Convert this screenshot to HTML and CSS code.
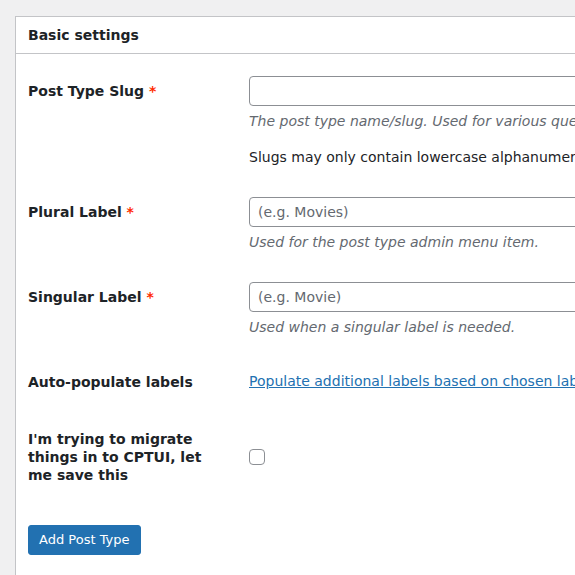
FILE: index.html
```html
<!DOCTYPE html>
<html>
<head>
<meta charset="utf-8">
<link rel="stylesheet" href="styles.css">
</head>
<body>
<div class="card">
  <h2 class="card-title">Basic settings</h2>
  <div class="inside">
    <div class="form-grid">
      <div class="th"><label>Post Type Slug <span class="req">*</span></label></div>
      <div class="td">
        <input class="text" type="text">
        <p class="desc">The post type name/slug. Used for various queries for post type content.</p>
        <p class="note">Slugs may only contain lowercase alphanumeric characters, dashes, and underscores.</p>
      </div>

      <div class="th"><label>Plural Label <span class="req">*</span></label></div>
      <div class="td">
        <input class="text" type="text" placeholder="(e.g. Movies)">
        <p class="desc">Used for the post type admin menu item.</p>
      </div>

      <div class="th"><label>Singular Label <span class="req">*</span></label></div>
      <div class="td">
        <input class="text" type="text" placeholder="(e.g. Movie)">
        <p class="desc">Used when a singular label is needed.</p>
      </div>

      <div class="th">Auto-populate labels</div>
      <div class="td td-link"><a href="#">Populate additional labels based on chosen labels</a></div>

      <div class="th th-multi">I'm trying to migrate things in to CPTUI, let me save this</div>
      <div class="td td-mid"><span class="checkbox"></span></div>
    </div>
    <button class="btn" type="button">Add Post Type</button>
  </div>
</div>
</body>
</html>
```

FILE: styles.css
```css
html, body {
  margin: 0;
  padding: 0;
}
body {
  background: #f0f0f1;
  font-family: "DejaVu Sans", Verdana, sans-serif;
  font-size: 14px;
  color: #1d2327;
  padding: 16px 0 0 15px;
  height: 575px;
  box-sizing: border-box;
  overflow: hidden;
}
.card {
  background: #fff;
  border: 1px solid #c3c4c7;
  width: 700px;
  height: 700px;
}
.card-title {
  margin: 0;
  font-size: 14px;
  font-weight: bold;
  line-height: 20px;
  padding: 8px 12px;
  border-bottom: 1px solid #c3c4c7;
}
.inside {
  padding: 7px 12px 12px 12px;
}
.form-grid {
  display: grid;
  grid-template-columns: 221px 1fr;
}
.th {
  font-weight: bold;
  font-size: 14px;
  line-height: 18px;
  padding: 21px 21px 19px 0;
}
.th-multi {
  padding-top: 20px;
  padding-bottom: 20px;
}
.req {
  color: #ff2a00;
}
.td {
  padding: 15px 0;
  line-height: 20px;
}
.td-link {
  padding-top: 19px;
}
.td-mid {
  display: flex;
  align-items: center;
  padding: 0;
}
.text {
  display: block;
  box-sizing: border-box;
  width: 400px;
  height: 30px;
  margin: 0;
  padding: 0 8px;
  border: 1px solid #8c8f94;
  border-radius: 4px;
  font-family: "DejaVu Sans", Verdana, sans-serif;
  font-size: 14px;
  color: #2c3338;
  background: #fff;
}
.text::placeholder {
  color: #646970;
}
.desc {
  margin: 5px 0 0 0;
  font-style: italic;
  color: #646970;
  white-space: nowrap;
}
.note {
  margin: 16px 0 0 0;
  white-space: nowrap;
  color: #1d2327;
}
a {
  color: #2271b1;
  text-decoration: underline;
  white-space: nowrap;
}
.checkbox {
  display: block;
  box-sizing: border-box;
  width: 16px;
  height: 16px;
  border: 1px solid #8c8f94;
  border-radius: 4px;
  background: #fff;
}
.btn {
  display: block;
  margin-top: 21px;
  height: 30px;
  padding: 0 10px;
  background: #2271b1;
  border: 1px solid #2271b1;
  border-radius: 3px;
  color: #fff;
  font-family: "DejaVu Sans", Verdana, sans-serif;
  font-size: 13px;
  line-height: 28px;
}
```
